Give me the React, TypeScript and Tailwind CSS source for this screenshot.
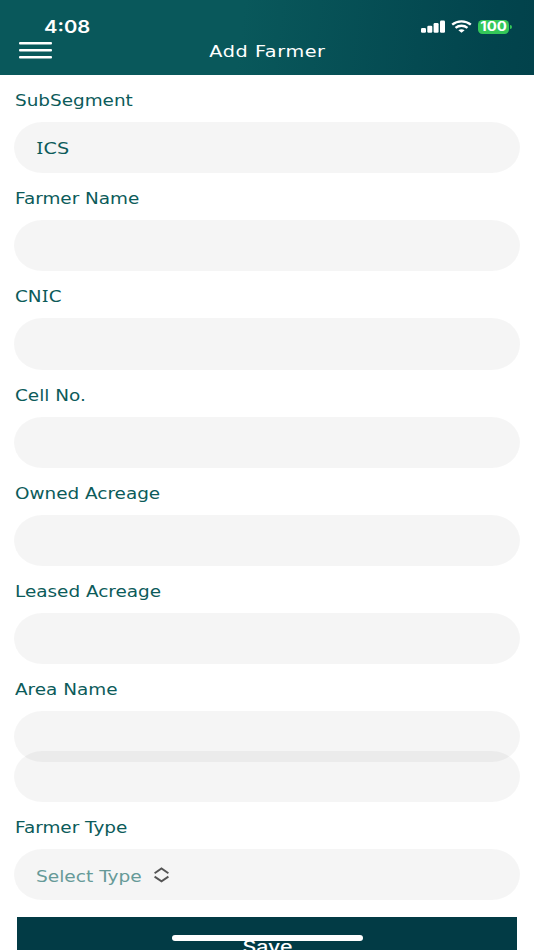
import { useState } from "react";

type Field = {
    key: string;
    label: string;
};

const fields: Field[] = [
    { key: "name", label: "Farmer Name" },
    { key: "cnic", label: "CNIC" },
    { key: "cell", label: "Cell No." },
    { key: "owned", label: "Owned Acreage" },
    { key: "leased", label: "Leased Acreage" },
    { key: "area", label: "Area Name" },
];

const pill =
    "block w-full h-[51.2px] rounded-[28px/25.6px] bg-black/[0.041] px-[22px] outline-none text-[#0c5b5a]";

function Text({ value }: { value: string }) {
    return (
        <>
            {value.split(/(I)/).map((part, i) =>
                part === "I" ? (
                    <span
                        key={i}
                        className="mx-[0.4px] font-[family-name:'Noto_Sans',sans-serif] text-[16.3px] leading-none"
                    >
                        I
                    </span>
                ) : (
                    part
                )
            )}
        </>
    );
}

function Label({ text }: { text: string }) {
    return (
        <div className="h-[47px] pt-[5px] pl-[0.5px] flex items-center">
            <span className="inline-block origin-left scale-x-[1.15] whitespace-nowrap text-[#0c5b5a]">
                <Text value={text} />
            </span>
        </div>
    );
}

function StatusIcons() {
    return (
        <div className="flex items-center">
            {/* SIGNAL */}
            <svg width="24" height="13" viewBox="0 0 24 13" fill="white">
                <rect x="0" y="8" width="5" height="4.7" rx="1.2" />
                <rect x="6.3" y="5.7" width="5" height="7" rx="1.2" />
                <rect x="12.6" y="3.1" width="5" height="9.6" rx="1.2" />
                <rect x="19" y="0.5" width="5" height="12.2" rx="1.2" />
            </svg>

            {/* WIFI */}
            <svg
                className="ml-[6px]"
                width="21"
                height="13"
                viewBox="0 0 21 13"
                fill="none"
                stroke="white"
                strokeWidth="2.4"
            >
                <path d="M1.2 4.6C6.4 0.3 14.6 0.3 19.8 4.6" />
                <path d="M4.5 7.9C8 5.1 13 5.1 16.5 7.9" />
                <path
                    d="M7.4 10.2C9.2 8.8 11.8 8.8 13.6 10.2L10.5 12.7Z"
                    fill="white"
                    stroke="none"
                />
            </svg>

            {/* BATTERY */}
            <div className="ml-[5.5px] flex h-[14.4px] w-[31.5px] items-center justify-center rounded-[4.5px] bg-[#34c759]">
                <span className="inline-block scale-x-[1.15] font-[family-name:Inter,sans-serif] text-[13px] font-bold leading-none text-white">
                    100
                </span>
            </div>
            <div className="ml-[1px] h-[4.5px] w-[1.8px] rounded-r-full bg-[#34c759]" />
        </div>
    );
}

export default function AddFarmerPage() {
    const [values, setValues] = useState<Record<string, string>>({});

    const update = (key: string, value: string) => {
        setValues({ ...values, [key]: value });
    };

    return (
        <div className="relative h-[950px] w-[534px] overflow-hidden bg-white font-[family-name:'DejaVu_Sans',sans-serif] text-[16px] leading-5">
            {/* HEADER */}
            <header className="h-[75px] bg-[linear-gradient(97deg,#09585b_0%,#09585b_45%,#02444d_92%,#02424b_100%)] pt-[17px] text-white">
                <div className="flex h-[20px] items-center justify-between pl-[43.5px] pr-[22px]">
                    <span className="inline-block origin-left scale-x-[1.19] font-[family-name:Inter,sans-serif] text-[17px] font-semibold">
                        4:08
                    </span>
                    <StatusIcons />
                </div>

                <div className="grid h-[27px] grid-cols-[1fr_auto_1fr] items-center">
                    <button className="ml-[19px] w-[33px]">
                        <svg width="33" height="17" viewBox="0 0 33 17" fill="white">
                            <rect x="0" y="0.1" width="33" height="2.4" rx="1" />
                            <rect x="0" y="7.1" width="33" height="2.4" rx="1" />
                            <rect x="0" y="14" width="33" height="2.4" rx="1" />
                        </svg>
                    </button>
                    <h1 className="scale-x-[1.2] pt-[2px] tracking-[0.5px]">Add Farmer</h1>
                </div>
            </header>

            {/* FORM */}
            <main className="pl-[14.3px] pr-[14.3px]">
                <Label text="SubSegment" />
                <div className={pill + " flex items-center pt-[3px]"}>
                    <span className="inline-block origin-left scale-x-[1.2] whitespace-nowrap">
                        <Text value="ICS" />
                    </span>
                </div>

                {fields.map((field) => (
                    <div key={field.key}>
                        <Label text={field.label} />
                        <input
                            className={pill}
                            value={values[field.key] || ""}
                            onChange={(e) => update(field.key, e.target.value)}
                        />
                    </div>
                ))}

                {/* AREA SEARCH */}
                <input
                    className={pill + " -mt-[11.5px]"}
                    value={values.areaSearch || ""}
                    onChange={(e) => update("areaSearch", e.target.value)}
                />

                <Label text="Farmer Type" />
                <button className={pill + " flex items-center"}>
                    <span className="w-[117.5px] pt-[4px] text-left">
                        <span className="inline-block origin-left scale-x-[1.16] whitespace-nowrap text-[#669a98]">
                            Select Type
                        </span>
                    </span>
                    <svg
                        width="15"
                        height="16"
                        viewBox="0 0 15 16"
                        fill="none"
                        stroke="#555555"
                        strokeWidth="1.9"
                    >
                        <path d="M0.6 6.2L7.5 1.5L14.4 6.2" />
                        <path d="M0.6 9.6L7.5 14.3L14.4 9.6" />
                    </svg>
                </button>

                <button className="mx-[3px] mt-[16.7px] block h-[61px] w-[499.4px] bg-[#023b45] text-white">
                    <span className="inline-block scale-x-[1.22] font-[family-name:Inter,sans-serif] text-[17.5px] font-medium">
                        Save
                    </span>
                </button>
            </main>

            {/* HOME INDICATOR */}
            <div className="absolute left-[171.5px] top-[934.7px] h-[6px] w-[191px] rounded-full bg-white" />
        </div>
    );
}
